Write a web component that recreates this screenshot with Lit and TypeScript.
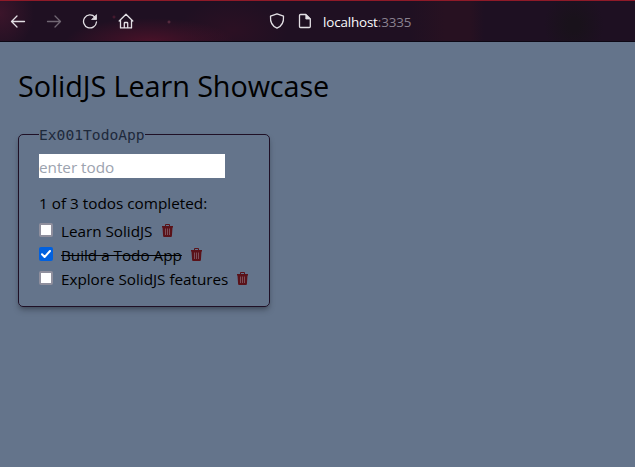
import { LitElement, html, css } from "lit";
import { customElement, property, state } from "lit/decorators.js";
import { classMap } from "lit/directives/class-map.js";

interface Todo {
  title: string;
  done: boolean;
  width: number;
}

@customElement("browser-bar")
class BrowserBar extends LitElement {
  static styles = css`
    :host {
      display: block;
    }
    .bar {
      box-sizing: border-box;
      height: 42px;
      border-top: 1px solid #8f1a28;
      border-bottom: 1px solid #0d0815;
      background:
        radial-gradient(ellipse 85px 24px at 150px 41px, rgba(84, 18, 42, 0.8), transparent),
        radial-gradient(ellipse 55px 32px at 232px 30px, rgba(56, 16, 36, 0.5), transparent),
        radial-gradient(ellipse 34px 40px at 0 12px, rgba(78, 24, 48, 0.6), transparent),
        radial-gradient(circle 2px at 169px 21px, rgba(170, 90, 110, 0.6), transparent),
        radial-gradient(circle 2px at 114px 16px, rgba(130, 40, 66, 0.6), transparent),
        radial-gradient(ellipse 30px 34px at 574px 24px, #19121b 20%, transparent),
        linear-gradient(90deg, #1f1022 0 410px, #271121 445px 470px, #1e1022 484px);
      display: flex;
      align-items: center;
      padding-left: 10px;
      font: 13.4px/18px "Open Sans", "Noto Sans", sans-serif;
    }
    svg {
      width: 16px;
      height: 16px;
      fill: none;
      stroke: #e2dfe4;
      stroke-width: 1.3;
      stroke-linecap: round;
      stroke-linejoin: round;
      flex: none;
      margin-right: 20px;
    }
    .dim {
      opacity: 0.42;
    }
    .home {
      margin-right: 135px;
    }
    .shield {
      margin-right: 12px;
    }
    .page {
      margin-right: 10px;
    }
    .solid {
      fill: #e2dfe4;
    }
    .host,
    .port {
      padding-top: 1px;
    }
    .host {
      color: #fbfbfe;
      letter-spacing: -0.15px;
    }
    .port {
      color: #8a8290;
      letter-spacing: -0.1px;
    }
  `;

  render() {
    return html`<div class="bar">
      <svg viewBox="0 0 16 16"><path d="M14.500 8.500H1.500M7 3L1.500 8.500L7 14" /></svg>
      <svg class="dim" viewBox="0 0 16 16"><path d="M1.500 8.500H14.500M9 3L14.500 8.500L9 14" /></svg>
      <svg viewBox="0 0 16 16">
        <path d="M12.800 4A6.500 6.500 0 1 0 14.500 9" />
        <path class="solid" d="M14.500 2V6.500H10Z" stroke-width="0.8" />
      </svg>
      <svg class="home" viewBox="0 0 16 16">
        <path d="M1.200 8L8 1.200L14.800 8M2.500 6.900V14.900H13.500V6.900M6.300 14.700V10.200Q6.300 9.500 7 9.500H9Q9.700 9.500 9.700 10.200V14.700" />
      </svg>
      <svg class="shield" viewBox="0 0 16 16">
        <path d="M8 .8L14.500 3.200C14.900 8.400 13 13 8 15.200C3 13 1.100 8.400 1.500 3.200Z" />
      </svg>
      <svg class="page" viewBox="0 0 16 16">
        <path d="M3.500 1.500H8.800L13.300 6V13.500Q13.300 14.500 12.300 14.500H3.500Q2.500 14.500 2.500 13.500V2.500Q2.500 1.500 3.500 1.500Z" />
        <path class="solid" d="M8.800 1.800V6H13Z" stroke-width="0.8" />
      </svg>
      <span class="host">localhost</span><span class="port">:3335</span>
    </div>`;
  }
}

@customElement("todo-item")
class TodoItem extends LitElement {
  @property({ attribute: false }) todo!: Todo;

  static styles = css`
    :host {
      display: flex;
      height: 24px;
      align-items: center;
    }
    .box {
      box-sizing: border-box;
      width: 14px;
      height: 14px;
      margin: 0 8px 2px 0;
      border: 2px solid #8f8f9d;
      border-radius: 2px;
      background: #fff;
      flex: none;
    }
    .checked {
      border: 0;
      background: #0060df;
    }
    .tick {
      display: block;
      width: 14px;
      height: 14px;
      fill: none;
      stroke: #fff;
      stroke-width: 2;
      stroke-linecap: round;
      stroke-linejoin: round;
    }
    .title {
      white-space: nowrap;
      letter-spacing: -0.03px;
    }
    .done {
      text-decoration: line-through;
    }
    .trash {
      width: 11px;
      height: 13px;
      margin: 0 0 2px 9px;
      flex: none;
      fill: #5a1219;
    }
    .slots {
      stroke: #85606a;
      stroke-width: 0.8;
    }
    .handle {
      fill: none;
      stroke: #5a1219;
    }
  `;

  render() {
    const { title, done, width } = this.todo;
    return html`
      <span class=${classMap({ box: true, checked: done })}>
        ${done ? html`<svg class="tick" viewBox="0 0 14 14"><path d="M3 7.300L5.600 10L11 4" /></svg>` : ""}
      </span>
      <span class=${classMap({ title: true, done })} style="width:${width}px">${title}</span>
      <svg class="trash" viewBox="0 0 11 13">
        <path class="handle" d="M3.500 2V.5H7.500V2" />
        <path d="M0 2H11V3.500H10.500L9.900 12Q9.800 13 9 13H2Q1.200 13 1.100 12L.5 3.500H0Z" />
        <path class="slots" d="M3.500 4.500V11M5.500 4.500V11M7.500 4.500V11" />
      </svg>
    `;
  }
}

@customElement("app-root")
class AppRoot extends LitElement {
  @state() private todos: Todo[] = [
    { title: "Learn SolidJS", done: false, width: 92 },
    { title: "Build a Todo App", done: true, width: 121 },
    { title: "Explore SolidJS features", done: false, width: 167 },
  ];

  static styles = css`
    :host {
      display: block;
      height: 100vh;
      overflow: hidden;
      background: #64748b;
      color: #000;
      font: 15.3px/24px "Open Sans", "Noto Sans", sans-serif;
    }
    main {
      padding: 26px 18px;
    }
    h1 {
      margin: 0;
      font-size: 28.8px;
      line-height: 36px;
      font-weight: 400;
      letter-spacing: -0.09px;
      white-space: nowrap;
    }
    fieldset {
      box-sizing: border-box;
      width: 252px;
      height: 185px;
      margin: 18px 0 0;
      padding: 8px 20px 0;
      border: 1px solid #1f1026;
      border-radius: 5px;
      box-shadow: 0 4px 6px -1px rgba(0, 0, 0, 0.25), 0 2px 4px -2px rgba(0, 0, 0, 0.25);
    }
    legend {
      padding: 2px 0 0;
      color: #1e293b;
      font: 14.640px/22px "DejaVu Sans Mono", monospace;
    }
    input {
      display: block;
      box-sizing: border-box;
      width: 186px;
      height: 24px;
      margin: 0 0 13px;
      padding: 2px 0 0;
      border: 0;
      font: inherit;
      letter-spacing: -0.03px;
      background: #fff;
    }
    input::placeholder {
      color: #9ca3af;
      opacity: 1;
    }
    .summary {
      margin-bottom: 4px;
      white-space: nowrap;
    }
  `;

  render() {
    const completed = this.todos.filter((t) => t.done).length;
    return html`
      <browser-bar></browser-bar>
      <main>
        <h1>SolidJS Learn Showcase</h1>
        <fieldset>
          <legend>Ex001TodoApp</legend>
          <input placeholder="enter todo" />
          <div class="summary">${completed} of ${this.todos.length} todos completed:</div>
          ${this.todos.map((t) => html`<todo-item .todo=${t}></todo-item>`)}
        </fieldset>
      </main>
    `;
  }
}
